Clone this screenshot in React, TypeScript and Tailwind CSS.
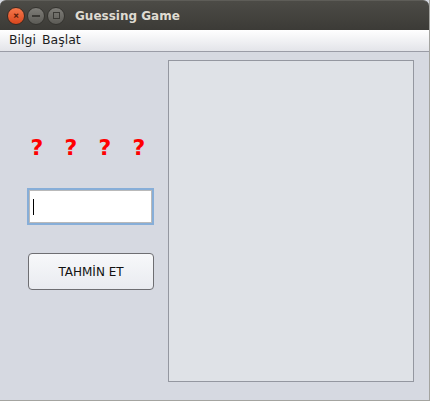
import React from 'react';

const App = () => {
  return (
    <div className="w-[432px] h-[402px] bg-white" style={{ fontFamily: 'Ubuntu, "DejaVu Sans", "Liberation Sans", sans-serif' }}>
      <div className="w-[430px] h-[401px] flex flex-col border-r border-b border-[#a4a4a0] bg-[#d6d9e1]">
        {/* Title bar */}
        <div className="h-[30px] rounded-t-[6px] bg-gradient-to-b from-[#4c4b46] to-[#3c3b37] flex items-center pl-[7px] border-t border-[#5e5d58]">
          <div className="flex items-center gap-[2px]">
            <div className="w-[18px] h-[18px] rounded-full bg-gradient-to-b from-[#f5774a] to-[#d9461c] border border-[#3a2a22] flex items-center justify-center text-[#5a1e0a] text-[11px] leading-none font-bold">×</div>
            <div className="w-[18px] h-[18px] rounded-full bg-gradient-to-b from-[#7e7d78] to-[#5c5b56] border border-[#34332f] flex items-center justify-center">
              <div className="w-[8px] h-[2px] bg-[#3a3935]" />
            </div>
            <div className="w-[18px] h-[18px] rounded-full bg-gradient-to-b from-[#7e7d78] to-[#5c5b56] border border-[#34332f] flex items-center justify-center">
              <div className="w-[7px] h-[7px] border border-[#3a3935]" />
            </div>
          </div>
          <div className="ml-[10px] text-[12px] font-bold text-[#dfdbd2]" style={{ fontFamily: '"DejaVu Sans", sans-serif' }}>Guessing Game</div>
        </div>

        {/* Menu bar */}
        <div className="h-[22px] bg-gradient-to-b from-[#ffffff] to-[#e3e4e9] border-b border-[#9a9ca6] flex items-center pl-[9px] gap-[6px] text-[12.5px] text-[#1e1e1e]" style={{ fontFamily: '"DejaVu Sans", sans-serif' }}>
          <span>Bilgi</span>
          <span>Başlat</span>
        </div>

        {/* Content */}
        <div className="flex-1 flex pt-[8px]">
          <div className="w-[168px] flex flex-col pl-[27px]">
            <div className="mt-[77px] flex gap-[16px] pl-[1px] text-[22px] font-bold text-[#ff0000] leading-none" style={{ fontFamily: '"DejaVu Sans", sans-serif' }}>
              <span className="w-[18px] text-center">?</span>
              <span className="w-[18px] text-center">?</span>
              <span className="w-[18px] text-center">?</span>
              <span className="w-[18px] text-center">?</span>
            </div>
            <div className="mt-[29px] w-[127px] h-[37px] bg-white border-2 border-[#87aed8] flex items-center">
              <div className="w-full h-full border border-[#b9b9b9] flex items-center pl-[3px]">
                <div className="w-[1px] h-[16px] bg-black" />
              </div>
            </div>
            <button className="mt-[28px] ml-[1px] w-[126px] h-[37px] rounded-[4px] border border-[#6e6e72] bg-gradient-to-b from-[#f7f8fa] to-[#e9ebf0] text-[12px] text-[#111]" style={{ fontFamily: '"DejaVu Sans", sans-serif' }}>
              TAHMİN ET
            </button>
          </div>
          <div className="w-[246px] h-[322px] bg-[#dfe2e7] border border-[#9497a0]" />
        </div>
      </div>
    </div>
  );
};

export default App;
